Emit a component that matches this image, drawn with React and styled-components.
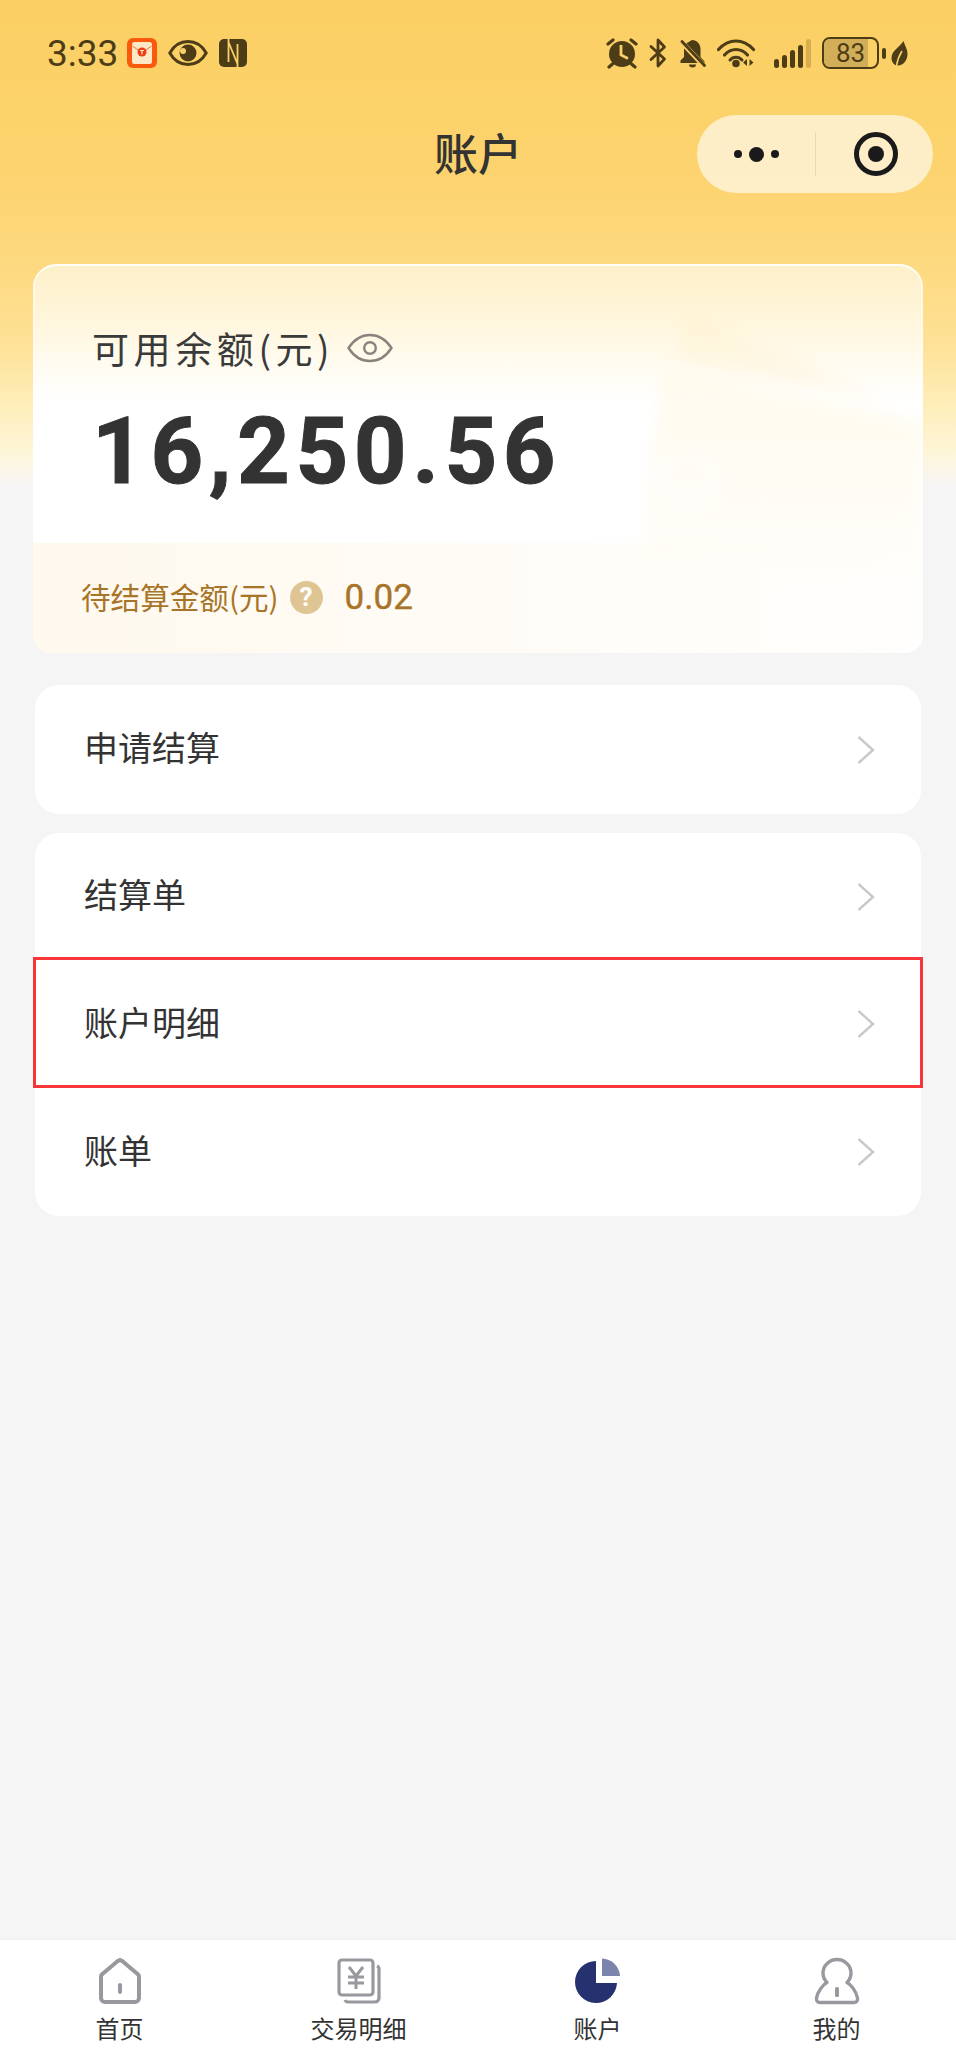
import React from 'react';
import styled, { createGlobalStyle } from 'styled-components';

const cjk = `'Noto Sans CJK SC', 'Noto Sans', sans-serif`;
const digits = `Roboto, 'Noto Sans CJK SC', sans-serif`;
const statusInk = '#4d3d17';
const statusBg = '#fbcf68';
const tabGrey = '#98989f';

const GlobalStyle = createGlobalStyle`
  html, body {
    margin: 0;
    padding: 0;
  }
  body {
    font-family: ${cjk};
    background: #f5f5f5;
  }
`;

const TimeIcons = () => (
  <>
    <svg width='30' height='30' viewBox='0 0 30 30'>
      <rect width='30' height='30' rx='6' fill='#fb5a0c' />
      <rect x='5' y='4' width='20' height='22' rx='2.5' fill='#fee9c6' />
      <path d='M5.5 8 L15 15 L24.5 8' fill='none' stroke='#f26a3a' strokeWidth='1' />
      <circle cx='15' cy='14' r='4.5' fill='#ee3d12' />
      <path d='M13 12.5h4M15 12.5v4' stroke='#fee9c6' strokeWidth='1.2' />
    </svg>
    <svg width='40' height='28' viewBox='0 0 40 28'>
      <path d='M1.8 14C6 6.5 12.5 2.5 20 2.5S34 6.5 38.2 14C34 21.5 27.5 25.5 20 25.5S6 21.5 1.8 14z' fill='none' stroke={statusInk} strokeWidth='3' />
      <circle cx='20' cy='14' r='8.5' fill={statusInk} />
      <circle cx='15' cy='12' r='3' fill={statusBg} />
    </svg>
    <svg width='28' height='28' viewBox='0 0 28 28'>
      <rect width='28' height='28' rx='5' fill={statusInk} />
      <path d='M9.500 0V23M9.500 3L18.500 25M18.500 28V5' fill='none' stroke={statusBg} strokeWidth='1.800' />
    </svg>
  </>
);

const SystemIcons = () => (
  <>
    <svg width='32' height='32' viewBox='0 0 32 32'>
      <circle cx='16' cy='17' r='13' fill={statusInk} />
      <path d='M15 8v10l7 3.500' fill='none' stroke={statusBg} strokeWidth='2.800' />
      <path d='M2 7L7 3M30 7L25 3M6.500 27l-3.500 3M25.500 27l3.500 3' stroke={statusInk} strokeWidth='3.200' strokeLinecap='round' />
    </svg>
    <svg width='19' height='30' viewBox='0 0 19 30'>
      <path d='M2 8.500l13.500 12.500-6.500 7V2l6.500 7L2 21.500' fill='none' stroke={statusInk} strokeWidth='2.800' strokeLinejoin='round' strokeLinecap='round' />
    </svg>
    <svg width='27' height='30' viewBox='0 0 27 30'>
      <path d='M13 2c5 0 8.500 4 8.500 9v8l4 4.500v1.500H1.500v-2.500L5 19v-8c0-2 .6-3.800 1.700-5.300L13 2z' fill={statusInk} />
      <path d='M10 26.500h7a3.500 3 0 0 1-7 0z' fill={statusInk} />
      <path d='M2.500 4L25 28' stroke={statusBg} strokeWidth='5' />
      <path d='M3 3.500L25.500 27.500' stroke={statusInk} strokeWidth='2.800' strokeLinecap='round' />
    </svg>
    <svg width='46' height='30' viewBox='0 0 46 30'>
      <path d='M1.500 11.500C6.500 6 12.500 3 19 3s12.500 3 17.500 8.500' fill='none' stroke={statusInk} strokeWidth='3.200' strokeLinecap='round' />
      <path d='M7.500 17C10.500 13.500 14.500 11.500 19 11.500s8.500 2 11.500 5.500' fill='none' stroke={statusInk} strokeWidth='3.200' strokeLinecap='round' />
      <path d='M13 22c1.500-1.800 3.600-2.800 6-2.800s4.500 1 6 2.800' fill='none' stroke={statusInk} strokeWidth='3' strokeLinecap='round' />
      <circle cx='19' cy='25.500' r='3.800' fill={statusInk} />
      <path d='M30 21v7l-4-3.500zM32.500 21v7l4-3.500z' fill={statusInk} />
    </svg>
    <SignalBars>
      {[9, 13, 18, 23].map((h) => (
        <SignalBar key={h} $h={h} />
      ))}
      <SignalBar $h={29} $faint />
    </SignalBars>
    <BatteryWrap>
      <BatteryBody>
        <BatteryFill />
        <BatteryText>83</BatteryText>
      </BatteryBody>
      <BatteryNub />
      <svg width='17' height='25' viewBox='0 0 17 25'>
        <path d='M12.500 0C14 5 16.500 8 16.500 13c0 6-4 11.500-9.500 11.500C3 24.500.5 21 .5 17 .5 9.500 8.500 6.500 12.500 0z' fill={statusInk} />
        <path d='M5.500 25C6.500 18 8.500 14 11 10' fill='none' stroke={statusBg} strokeWidth='1.500' />
      </svg>
    </BatteryWrap>
  </>
);

const EyeOutline = () => (
  <svg width='46' height='30' viewBox='0 0 46 30'>
    <path d='M1.500 15C7 6.500 14.500 2 23 2s16 4.500 21.500 13C39 23.500 31.500 28 23 28S7 23.500 1.500 15z' fill='none' stroke='#8a837d' strokeWidth='2.400' />
    <circle cx='23' cy='15' r='5.800' fill='none' stroke='#8a837d' strokeWidth='2.400' />
  </svg>
);

const WalletMark = () => (
  <Watermark width='330' height='389' viewBox='0 0 330 389'>
    <defs>
      <filter id='soft'>
        <feGaussianBlur stdDeviation='8' />
      </filter>
      <linearGradient id='fade' x1='0' y1='0' x2='0' y2='1'>
        <stop offset='0' stopColor='#fff3d2' stopOpacity='0.4' />
        <stop offset='0.7' stopColor='#fff8e6' stopOpacity='0.3' />
        <stop offset='1' stopColor='#fffdf8' stopOpacity='0' />
      </linearGradient>
    </defs>
    <g filter='url(#soft)'>
      <path d='M95 49L300 139L80 96z' fill='#fdecc0' opacity='0.25' />
      <path d='M67 122Q70 109 90 110L330 156V340H40z' fill='url(#fade)' />
      <ellipse cx='95' cy='213' rx='26' ry='20' fill='none' stroke='#fff' strokeWidth='6' opacity='0.8' />
    </g>
  </Watermark>
);

const Chevron = () => (
  <svg width='20' height='30' viewBox='0 0 20 30'>
    <path d='M2.500 2L17 15 2.500 28' fill='none' stroke='#c9c9c9' strokeWidth='2.400' />
  </svg>
);

const HomeIcon = () => (
  <svg width='48' height='48' viewBox='0 0 48 48'>
    <path d='M21.500 4.200a3.800 3.800 0 0 1 5 0l14.500 12.300a4 4 0 0 1 2 3.500V41a4 4 0 0 1-4 4H9a4 4 0 0 1-4-4V20a4 4 0 0 1 2-3.500z' fill='none' stroke={tabGrey} strokeWidth='4' strokeLinejoin='round' />
    <rect x='22' y='26' width='4' height='11' rx='2' fill={tabGrey} />
  </svg>
);

const TradeIcon = () => (
  <svg width='48' height='48' viewBox='0 0 48 48'>
    <rect x='4' y='3' width='34' height='35' rx='3' fill='none' stroke={tabGrey} strokeWidth='3.200' />
    <path d='M42 9c1.200.5 2 1.500 2 3v29a4 4 0 0 1-4 4H13c-1.500 0-2.500-.8-3-2' fill='none' stroke={tabGrey} strokeWidth='3.200' />
    <path d='M14 10l7 9 7-9M13 20h16M13 26h16M21 19v13' fill='none' stroke={tabGrey} strokeWidth='3' />
  </svg>
);

const PieIcon = () => (
  <svg width='48' height='48' viewBox='0 0 48 48'>
    <path d='M22 4v22h21A21 21 0 1 1 22 4z' fill='#26316f' />
    <path d='M28 1.500A18.500 18.500 0 0 1 46 19H28z' fill='#7b84aa' />
  </svg>
);

const PersonIcon = () => (
  <svg width='48' height='48' viewBox='0 0 48 48'>
    <path d='M14 25.500C11 22.500 10 19.500 10 16 10 8.500 16.500 2.500 24 2.500S38 8.500 38 16c0 3.500-1 6.500-4 9.500 4 2 9 8.500 10.500 15.500.5 2.500-1 4.500-3.500 4.500H7c-2.500 0-4-2-3.500-4.500C5 34 10 27.500 14 25.500z' fill='none' stroke={tabGrey} strokeWidth='3.400' strokeLinejoin='round' />
    <rect x='22' y='30' width='4' height='10' rx='1.500' fill={tabGrey} />
  </svg>
);

const tabs = [
  { label: '首页', icon: <HomeIcon /> },
  { label: '交易明细', icon: <TradeIcon /> },
  { label: '账户', icon: <PieIcon /> },
  { label: '我的', icon: <PersonIcon /> },
];

const App = () => {
  return (
    <Page>
      <GlobalStyle />
      <StatusBar>
        <StatusGroup>
          <Time>3:33</Time>
          <TimeIcons />
        </StatusGroup>
        <StatusGroup>
          <SystemIcons />
        </StatusGroup>
      </StatusBar>
      <NavBar>
        <NavTitle>账户</NavTitle>
        <Capsule>
          <CapsulePart>
            <Dot />
            <Dot $big />
            <Dot />
          </CapsulePart>
          <CapsulePart $divided>
            <TargetRing>
              <TargetCore />
            </TargetRing>
          </CapsulePart>
        </Capsule>
      </NavBar>
      <Content>
        <BalanceCard>
          <WalletMark />
          <BalanceTop>
            <BalanceLabel>
              可用余额(元)
              <EyeOutline />
            </BalanceLabel>
            <BalanceAmount>16,250.56</BalanceAmount>
          </BalanceTop>
          <BalanceFooter>
            <PendingLabel>待结算金额(元)</PendingLabel>
            <HelpBadge>?</HelpBadge>
            <PendingValue>0.02</PendingValue>
          </BalanceFooter>
        </BalanceCard>
        <ListGroup $gap={32}>
          <ListRow $height={129}>
            <RowText>申请结算</RowText>
            <Chevron />
          </ListRow>
        </ListGroup>
        <ListGroup $gap={19}>
          <ListRow>
            <RowText>结算单</RowText>
            <Chevron />
          </ListRow>
          <ListRow $marked>
            <RowText>账户明细</RowText>
            <Chevron />
          </ListRow>
          <ListRow>
            <RowText>账单</RowText>
            <Chevron />
          </ListRow>
        </ListGroup>
      </Content>
      <TabBar>
        {tabs.map((tab) => (
          <TabItem key={tab.label}>
            {tab.icon}
            <TabLabel>{tab.label}</TabLabel>
          </TabItem>
        ))}
      </TabBar>
    </Page>
  );
};

export default App;

const Page = styled.div`
  display: flex;
  flex-direction: column;
  min-height: 100vh;
  background: linear-gradient(
    180deg,
    #fbcf63 0,
    #fcd36e 170px,
    #fdd87c 250px,
    #fee195 340px,
    #feeeba 407px,
    #fef6dc 457px,
    #f5f5f5 487px,
    #f5f5f5 100%
  );
`;
const StatusBar = styled.div`
  display: flex;
  justify-content: space-between;
  align-items: center;
  height: 106px;
  padding: 0 48px 0 47px;
`;
const StatusGroup = styled.div`
  display: flex;
  align-items: center;
  gap: 11px;
`;
const Time = styled.span`
  margin-right: -2px;
  color: ${statusInk};
  font-family: ${digits};
  font-size: 37px;
  line-height: 1;
`;
const SignalBars = styled.div`
  display: flex;
  align-items: flex-end;
  gap: 3px;
  height: 30px;
`;
const SignalBar = styled.span`
  width: 5px;
  height: ${(p) => p.$h}px;
  border-radius: 2.5px;
  background: ${(p) => (p.$faint ? '#d6ae4c' : statusInk)};
`;
const BatteryWrap = styled.div`
  display: flex;
  align-items: center;
  gap: 3px;
`;
const BatteryBody = styled.div`
  position: relative;
  box-sizing: border-box;
  width: 57px;
  height: 32px;
  border: 2px solid ${statusInk};
  border-radius: 8px;
  overflow: hidden;
`;
const BatteryFill = styled.div`
  position: absolute;
  inset: 0 9px 0 0;
  background: #d3ae58;
`;
const BatteryText = styled.span`
  position: relative;
  display: block;
  color: ${statusInk};
  font-family: ${digits};
  font-size: 26px;
  line-height: 28px;
  text-align: center;
`;
const BatteryNub = styled.span`
  width: 4px;
  height: 11px;
  margin-right: 2px;
  border-radius: 2px;
  background: ${statusInk};
`;
const NavBar = styled.div`
  display: grid;
  grid-template-columns: 1fr auto 1fr;
  align-items: center;
  height: 78px;
  margin-top: 9px;
  padding-right: 23px;
`;
const NavTitle = styled.h1`
  grid-column: 2;
  margin: 0 0 5px 23px;
  color: #333;
  font-size: 44px;
  font-weight: 500;
  line-height: 1;
`;
const Capsule = styled.div`
  grid-column: 3;
  justify-self: end;
  display: flex;
  width: 236px;
  height: 78px;
  border-radius: 39px;
  background: rgba(255, 255, 255, 0.62);
`;
const CapsulePart = styled.div`
  position: relative;
  flex: 1;
  display: flex;
  align-items: center;
  justify-content: center;
  gap: 7px;
  &::before {
    content: '';
    display: ${(p) => (p.$divided ? 'block' : 'none')};
    position: absolute;
    left: 0;
    top: 17px;
    bottom: 17px;
    width: 1px;
    background: rgba(190, 170, 110, 0.3);
  }
`;
const Dot = styled.span`
  width: ${(p) => (p.$big ? 15 : 8)}px;
  height: ${(p) => (p.$big ? 15 : 8)}px;
  border-radius: 50%;
  background: #1a1a1a;
`;
const TargetRing = styled.div`
  display: flex;
  align-items: center;
  justify-content: center;
  box-sizing: border-box;
  width: 44px;
  height: 44px;
  margin-left: 4px;
  border: 5px solid #1a1a1a;
  border-radius: 50%;
`;
const TargetCore = styled.span`
  width: 16px;
  height: 16px;
  border-radius: 50%;
  background: #1a1a1a;
`;
const Content = styled.main`
  flex: 1;
  display: flex;
  flex-direction: column;
  padding: 71px 33px 0;
`;
const BalanceCard = styled.section`
  position: relative;
  display: flex;
  flex-direction: column;
  height: 389px;
  overflow: hidden;
  border-radius: 24px 24px 18px 18px;
  background: linear-gradient(180deg, #fdf0c9 0, #fff5d9 50px, #fffbf0 100px, #fff 135px);
  box-shadow: inset 0 2px 0 rgba(255, 255, 255, 0.85), inset 2px 0 0 rgba(255, 255, 255, 0.45), inset -2px 0 0 rgba(255, 255, 255, 0.45);
`;
const Watermark = styled.svg`
  position: absolute;
  top: 0;
  right: 0;
  z-index: 1;
`;
const BalanceTop = styled.div`
  position: relative;
  z-index: 2;
  height: 279px;
  padding: 59px 0 0 59px;
  box-sizing: border-box;
`;
const BalanceLabel = styled.div`
  display: flex;
  align-items: center;
  gap: 13px;
  height: 50px;
  color: #3a3a3a;
  font-size: 37px;
  letter-spacing: 4.6px;
`;
const BalanceAmount = styled.div`
  margin-top: 29px;
  color: #333;
  font-family: ${digits};
  font-size: 92px;
  font-weight: 700;
  line-height: 100px;
  letter-spacing: 5.6px;
  -webkit-text-stroke: 1px #333;
`;
const BalanceFooter = styled.div`
  position: relative;
  z-index: 2;
  flex: 1;
  display: flex;
  align-items: center;
  padding: 0 0 2px 48px;
  background: linear-gradient(90deg, rgba(254, 246, 230, 0.7) 0, rgba(255, 249, 238, 0.5) 50%, rgba(255, 253, 248, 0.3) 100%);
`;
const PendingLabel = styled.span`
  padding-bottom: 2px;
  color: #a87428;
  font-size: 29.6px;
`;
const HelpBadge = styled.span`
  display: flex;
  align-items: center;
  justify-content: center;
  width: 33px;
  height: 33px;
  margin-left: 11px;
  border-radius: 50%;
  background: #e0c594;
  color: #fff;
  font-family: ${digits};
  font-size: 26px;
  font-weight: 700;
`;
const PendingValue = styled.span`
  margin-left: 22px;
  color: #a87428;
  font-family: ${digits};
  font-size: 35px;
  font-weight: 400;
  -webkit-text-stroke: 0.4px #a87428;
`;
const ListGroup = styled.section`
  margin: ${(p) => p.$gap}px 2px 0;
  border-radius: 24px;
  background: #fff;
`;
const ListRow = styled.div`
  position: relative;
  display: flex;
  align-items: center;
  justify-content: space-between;
  height: ${(p) => p.$height || 127.67}px;
  padding: 0 45px 0 49px;
  color: #333;
  font-size: 34px;
  &::after {
    content: '';
    display: ${(p) => (p.$marked ? 'block' : 'none')};
    position: absolute;
    inset: -4px -2px 0;
    border: 3px solid #f83538;
  }
`;
const RowText = styled.span`
  padding-bottom: 6px;
`;
const TabBar = styled.nav`
  display: grid;
  grid-template-columns: repeat(4, 1fr);
  height: 118px;
  background: #fff;
  box-shadow: 0 -1px 2px rgba(0, 0, 0, 0.03);
`;
const TabItem = styled.div`
  display: flex;
  flex-direction: column;
  align-items: center;
  padding-top: 17px;
`;
const TabLabel = styled.span`
  margin-top: 6px;
  color: #333;
  font-size: 24px;
  line-height: 34px;
`;
